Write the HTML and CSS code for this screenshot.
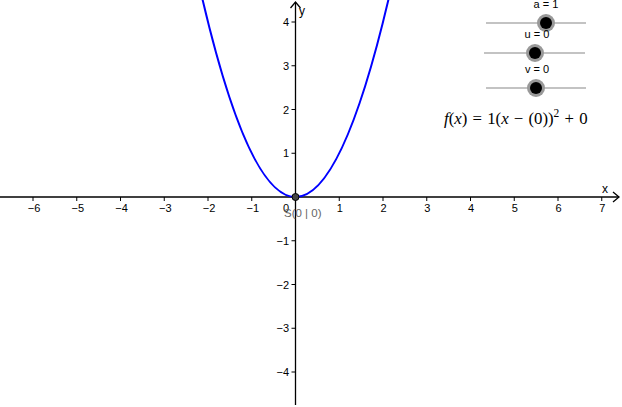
FILE: index.html
```html
<!DOCTYPE html>
<html>
<head>
<meta charset="utf-8">
<link rel="stylesheet" href="styles.css">
</head>
<body>
<div class="view">
<svg class="graph" width="622" height="407" viewBox="0 0 622 407" xmlns="http://www.w3.org/2000/svg">
  <g class="axes">
    <line x1="0" y1="197" x2="619" y2="197"/>
    <polyline points="613,192 619,197 613,202" fill="none"/>
    <line x1="295.5" y1="2" x2="295.5" y2="405"/>
    <polyline points="290.5,8 295.5,2 300.5,8" fill="none"/>
  </g>
  <g class="ticks">
    <line x1="33" y1="197" x2="33" y2="201"/>
    <line x1="76.75" y1="197" x2="76.75" y2="201"/>
    <line x1="120.5" y1="197" x2="120.5" y2="201"/>
    <line x1="164.25" y1="197" x2="164.25" y2="201"/>
    <line x1="208" y1="197" x2="208" y2="201"/>
    <line x1="251.75" y1="197" x2="251.75" y2="201"/>
    <line x1="339.25" y1="197" x2="339.25" y2="201"/>
    <line x1="383" y1="197" x2="383" y2="201"/>
    <line x1="426.75" y1="197" x2="426.75" y2="201"/>
    <line x1="470.5" y1="197" x2="470.5" y2="201"/>
    <line x1="514.25" y1="197" x2="514.25" y2="201"/>
    <line x1="558" y1="197" x2="558" y2="201"/>
    <line x1="601.75" y1="197" x2="601.75" y2="201"/>
    <line x1="291.5" y1="22" x2="295.5" y2="22"/>
    <line x1="291.5" y1="65.75" x2="295.5" y2="65.75"/>
    <line x1="291.5" y1="109.5" x2="295.5" y2="109.5"/>
    <line x1="291.5" y1="153.25" x2="295.5" y2="153.25"/>
    <line x1="291.5" y1="240.75" x2="295.5" y2="240.75"/>
    <line x1="291.5" y1="284.5" x2="295.5" y2="284.5"/>
    <line x1="291.5" y1="328.25" x2="295.5" y2="328.25"/>
    <line x1="291.5" y1="372" x2="295.5" y2="372"/>
  </g>
  <g class="xlabels">
    <text x="34" y="212">−6</text>
    <text x="77.75" y="212">−5</text>
    <text x="121.5" y="212">−4</text>
    <text x="165.25" y="212">−3</text>
    <text x="209" y="212">−2</text>
    <text x="252.75" y="212">−1</text>
    <text x="286" y="212">0</text>
    <text x="339.75" y="212">1</text>
    <text x="383.5" y="212">2</text>
    <text x="427.25" y="212">3</text>
    <text x="471" y="212">4</text>
    <text x="514.75" y="212">5</text>
    <text x="558.5" y="212">6</text>
    <text x="602.25" y="212">7</text>
  </g>
  <g class="ylabels">
    <text x="289" y="26">4</text>
    <text x="289" y="69.75">3</text>
    <text x="289" y="113.5">2</text>
    <text x="289" y="157.25">1</text>
    <text x="289" y="244.75">−1</text>
    <text x="289" y="288.5">−2</text>
    <text x="289" y="332.25">−3</text>
    <text x="289" y="376">−4</text>
  </g>
  <text class="axisname" x="602" y="193">x</text>
  <text class="axisname" x="299" y="15">y</text>
  <path class="curve" d="M202.3 -1.5 Q295.5 395.5 388.7 -1.5"/>
  <circle class="point" cx="295.5" cy="197" r="3.5"/>
  <text class="ptlabel" x="284" y="217">S(0 | 0)</text>

  <g class="slider">
    <line x1="486" y1="23" x2="586" y2="23"/>
    <circle class="halo" cx="546" cy="23" r="9"/>
    <circle class="knob" cx="546" cy="23" r="6"/>
    <text x="546" y="8">a = 1</text>
  </g>
  <g class="slider">
    <line x1="484" y1="53" x2="585" y2="53"/>
    <circle class="halo" cx="535" cy="53" r="9"/>
    <circle class="knob" cx="535" cy="53" r="6"/>
    <text x="537" y="38">u = 0</text>
  </g>
  <g class="slider">
    <line x1="486" y1="88" x2="586" y2="88"/>
    <circle class="halo" cx="536" cy="88" r="9"/>
    <circle class="knob" cx="536" cy="88" r="6"/>
    <text x="537" y="73">v = 0</text>
  </g>

  <text class="formula" x="444" y="124"><tspan class="it">f</tspan>(<tspan class="it">x</tspan>) = 1(<tspan class="it">x</tspan> − (0))<tspan class="sup" dy="-7">2</tspan><tspan dy="7"> + 0</tspan></text>
</svg>
</div>
</body>
</html>
```
FILE: styles.css
```css
html, body {
  margin: 0;
  padding: 0;
  background: #ffffff;
}
.view {
  width: 622px;
  height: 407px;
  overflow: hidden;
}
.graph {
  display: block;
}
.axes line, .axes polyline {
  stroke: #000000;
  stroke-width: 1.3;
}
.ticks line {
  stroke: #000000;
  stroke-width: 1;
}
.xlabels text, .ylabels text, .axisname, .ptlabel, .slider text {
  font-family: "Liberation Sans", Arial, sans-serif;
  font-size: 11px;
  fill: #000000;
}
.xlabels text {
  text-anchor: middle;
}
.ylabels text {
  text-anchor: end;
}
.axisname {
  font-size: 12px;
}
.ptlabel {
  fill: #666666;
  font-size: 11.5px;
}
.curve {
  fill: none;
  stroke: #0000ff;
  stroke-width: 2;
}
.point {
  fill: #444444;
  stroke: #000000;
  stroke-width: 1;
}
.slider line {
  stroke: #888888;
  stroke-width: 1.2;
}
.slider .halo {
  fill: #999999;
}
.slider .knob {
  fill: #000000;
}
.slider text {
  text-anchor: middle;
}
.formula {
  font-family: "Liberation Serif", "Times New Roman", serif;
  font-size: 16.8px;
  word-spacing: 1px;
  fill: #000000;
}
.formula .it {
  font-style: italic;
}
.formula .sup {
  font-size: 11.5px;
}
```
